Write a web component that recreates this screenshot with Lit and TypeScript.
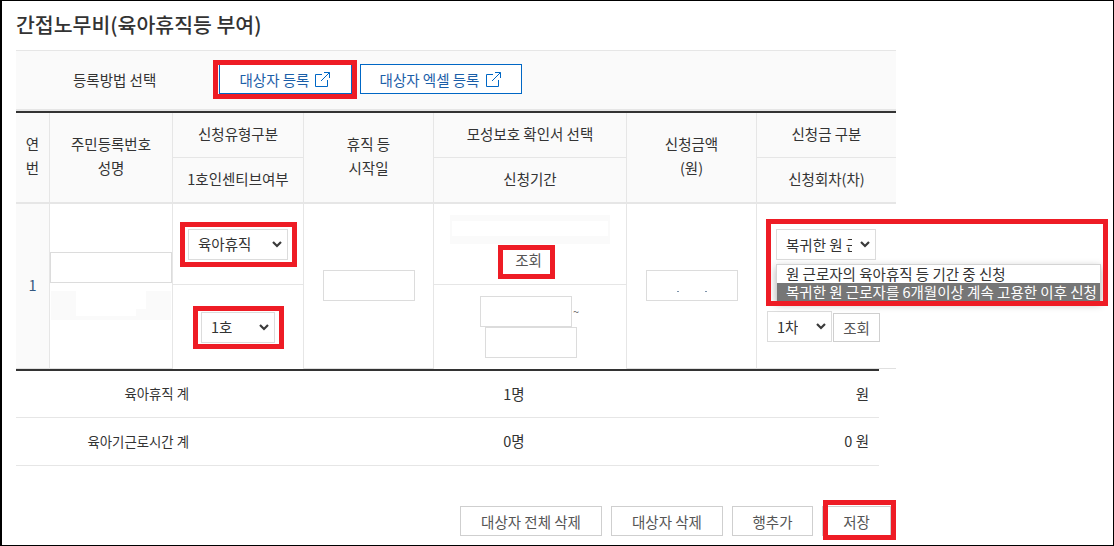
import { LitElement, html, css, svg } from "lit";
import { customElement } from "lit/decorators.js";

const marks = [
  [213, 60, 144, 39],
  [180, 222, 117, 45],
  [193, 306, 91, 43],
  [498, 245, 57, 34],
  [766, 219, 342, 87],
  [823, 500, 73, 40],
];

const chevron = svg`<svg class="chev" width="10" height="7" viewBox="0 0 10 7"><path d="M1 1l4 4 4-4" fill="none" stroke="#3a3a3a" stroke-width="2.2"/></svg>`;
const ext = svg`<svg class="ext" width="16" height="16" viewBox="0 0 16 16"><path d="M7 3.5H.5v12h12V9M6 10l8.5-8.5M9 1.5h5.5V7" fill="none" stroke="#0067c5" stroke-width="1"/></svg>`;

@customElement("app-root")
export class AppRoot extends LitElement {
  static styles = css`
    :host {
      display: block;
      position: relative;
      width: 1114px;
      height: 546px;
      box-sizing: border-box;
      border: 1px solid #000;
      border-left-width: 2px;
      background: #fff;
      overflow: hidden;
      font-family: "Noto Sans CJK KR", "Noto Sans", sans-serif;
      font-size: 14.5px;
      color: #333;
    }
    h1 {
      margin: 0;
      padding: 8px 0 0 14px;
      height: 49px;
      box-sizing: border-box;
      font-size: 20.5px;
      line-height: 30px;
      font-weight: 500;
      color: #333;
    }
    .bar {
      margin-left: 14px;
      width: 880px;
      height: 61px;
      box-sizing: border-box;
      background: #fafafa;
      border-top: 1px solid #e6e6e6;
      border-bottom: 2px solid #e6e6e6;
      display: flex;
      align-items: center;
      padding-bottom: 2px;
    }
    .bar .label { width: 203px; padding-left: 57px; box-sizing: border-box; }
    .lnk {
      height: 30px;
      box-sizing: border-box;
      border: 1px solid #0067c5;
      background: #fff;
      color: #1a5ea8;
      display: flex;
      align-items: center;
      justify-content: center;
      gap: 6px;
    }
    .lnk.a { width: 133px; margin-right: 8px; }
    .lnk.b { width: 162px; gap: 7px; }
    table {
      margin-left: 14px;
      width: 880px;
      table-layout: fixed;
      border-collapse: separate;
      border-spacing: 0;
      border-top: 2px solid #333;
    }
    th, td {
      padding: 0;
      box-sizing: border-box;
      font-weight: 400;
      text-align: center;
      border-right: 1px solid #e6e6e6;
      vertical-align: middle;
      line-height: 24px;
    }
    th:last-child, td.last { border-right: none; }
    th { background: #fafafa; }
    .h1 { height: 45px; border-bottom: 1px solid #e6e6e6; padding-bottom: 2px; }
    .h2 { height: 46px; border-bottom: 2px solid #e6e6e6; padding-bottom: 2px; }
    .hs { height: 91px; border-bottom: 2px solid #e6e6e6; padding-bottom: 4px; }
    .b1 { height: 81px; border-bottom: 1px solid #e6e6e6; }
    .b2 { height: 84px; }
    .bs { height: 165px; border-bottom: 1px solid #e0e0e0; }
    td.num { background: #fafafa; color: #33577f; border-bottom: 1px solid #e0e0e0; padding-bottom: 2px; }
    .sel {
      display: inline-flex;
      align-items: center;
      justify-content: space-between;
      box-sizing: border-box;
      height: 31px;
      border: 1px solid #dcdcdc;
      background: #fff;
      padding: 0 5px 0 9px;
      overflow: hidden;
      white-space: nowrap;
      text-align: left;
      vertical-align: top;
    }
    .sel span { display: block; overflow: hidden; }
    .w100 { width: 100px; }
    .w74 { width: 74px; }
    .w65 { width: 65px; }
    .chev { flex: none; }
    .inp {
      display: block;
      box-sizing: border-box;
      height: 31px;
      border: 1px solid #dcdcdc;
      background: #fff;
    }
    .col2 { display: flex; flex-direction: column; align-items: center; gap: 8px; }
    .col2 .inp { width: 122px; }
    .redact {
      width: 120px;
      height: 29px;
      background: #fafafa;
      overflow: hidden;
      display: flex;
      padding-left: 25px;
      box-sizing: border-box;
    }
    .redact i { display: block; width: 60px; height: 25px; background: #fff; }
    .redact i + i { width: 10px; height: 18px; }
    .w92 { width: 92px; margin: -1px auto 0; }
    .amount { display: flex; align-items: flex-end; justify-content: center; gap: 26px; padding-bottom: 8px; }
    .amount b { width: 2px; height: 1px; background: #7d93aa; }
    .red2 {
      width: 160px;
      height: 29px;
      margin: 0 auto 2px;
      background: #fafafa;
      padding: 6px 2px 8px;
      box-sizing: border-box;
    }
    .red2 i { display: block; height: 15px; background: #fff; }
    .btn {
      display: inline-flex;
      align-items: center;
      justify-content: center;
      box-sizing: border-box;
      height: 30px;
      border: 1px solid #cfcfcf;
      background: #fff;
      color: #555;
    }
    .q { width: 50px; height: 28px; border: none; margin-right: 3px; }
    .dates { position: relative; width: 100px; margin: 0 auto; height: 62px; }
    .dates .inp { width: 92px; }
    .dates .one { position: absolute; left: 0; top: 0; }
    .dates .two { position: absolute; left: 5px; top: 31px; }
    .dates em { position: absolute; left: 93px; top: 3px; font-style: normal; font-size: 11px; color: #666; }
    .rtop { padding-top: 25px; padding-left: 19px; text-align: left; position: relative; vertical-align: top; }
    .rtop > .sel { display: flex; }
    .rtop .row { display: flex; align-items: flex-start; margin: 51px 0 0 -9px; }
    .rtop .q { width: 47px; height: 29px; margin: 2px 0 0 1px; border: 1px solid #cfcfcf; }
    .drop {
      position: absolute;
      left: 19px;
      top: 60px;
      width: 325px;
      height: 37px;
      box-sizing: border-box;
      background: #fff;
      border: 1px solid #d4d4d4;
      box-shadow: 0 3px 8px rgba(0, 0, 0, .3);
      line-height: 18px;
      white-space: nowrap;
      z-index: 1;
    }
    .drop div { height: 18px; padding-left: 9px; }
    .drop .on { background: #767676; color: #fff; }
    .tr {
      display: grid;
      grid-template-columns: 173px 1fr 150px;
      align-items: center;
      border-bottom: 1px solid #e6e6e6;
      width: 863px;
      margin-left: 14px;
      height: 47px;
      box-sizing: border-box;
      padding-bottom: 2px;
    }
    .tr.second { height: 48px; }
    .tr .l { text-align: right; font-size: 13.4px; }
    .tr .c { text-align: center; padding-left: 110px; box-sizing: border-box; }
    .tr .r { text-align: right; padding-right: 10px; }
    .line { margin-left: 14px; width: 863px; height: 2px; background: #333; }
    .foot { display: flex; gap: 9px; margin: 40px 0 0 458px; }
    .foot .btn { flex: none; }
    .mark {
      position: absolute;
      box-sizing: border-box;
      border: 5px solid #ee1c25;
      pointer-events: none;
      z-index: 2;
    }
  `;

  render() {
    return html`
      <h1>간접노무비(육아휴직등 부여)</h1>
      <div class="bar">
        <div class="label">등록방법 선택</div>
        <div class="lnk a">대상자 등록 ${ext}</div>
        <div class="lnk b">대상자 엑셀 등록 ${ext}</div>
      </div>
      <table>
        <colgroup>
          <col style="width:34px" /><col style="width:123px" /><col style="width:131px" /><col style="width:130px" /><col style="width:193px" /><col style="width:130px" /><col style="width:139px" />
        </colgroup>
        <thead>
          <tr>
            <th rowspan="2" class="hs">연<br />번</th>
            <th rowspan="2" class="hs">주민등록번호<br />성명</th>
            <th class="h1">신청유형구분</th>
            <th rowspan="2" class="hs">휴직 등<br />시작일</th>
            <th class="h1">모성보호 확인서 선택</th>
            <th rowspan="2" class="hs">신청금액<br />(원)</th>
            <th class="h1">신청금 구분</th>
          </tr>
          <tr>
            <th class="h2">1호인센티브여부</th>
            <th class="h2">신청기간</th>
            <th class="h2">신청회차(차)</th>
          </tr>
        </thead>
        <tbody>
          <tr>
            <td rowspan="2" class="bs num">1</td>
            <td rowspan="2" class="bs">
              <div class="col2">
                <div class="inp"></div>
                <div class="redact"><i></i><i></i></div>
              </div>
            </td>
            <td class="b1"><div class="sel w100"><span>육아휴직</span>${chevron}</div></td>
            <td rowspan="2" class="bs"><div class="inp w92"></div></td>
            <td class="b1">
              <div class="red2"><i></i></div>
              <div class="btn q">조회</div>
            </td>
            <td rowspan="2" class="bs">
              <div class="inp w92 amount"><b></b><b></b></div>
            </td>
            <td rowspan="2" class="bs last rtop">
              <div class="sel w100"><span style="width:66px">복귀한 원 근로자를 6개월이상</span>${chevron}</div>
              <div class="drop">
                <div>원 근로자의 육아휴직 등 기간 중 신청</div>
                <div class="on">복귀한 원 근로자를 6개월이상 계속 고용한 이후 신청</div>
              </div>
              <div class="row">
                <div class="sel w65"><span>1차</span>${chevron}</div>
                <div class="btn q">조회</div>
              </div>
            </td>
          </tr>
          <tr>
            <td class="b2"><div class="sel w74"><span>1호</span>${chevron}</div></td>
            <td class="b2">
              <div class="dates">
                <div class="inp one"></div>
                <em>~</em>
                <div class="inp two"></div>
              </div>
            </td>
          </tr>
        </tbody>
      </table>
      <div class="line"></div>
      <div class="tr"><div class="l">육아휴직 계</div><div class="c">1명</div><div class="r">원</div></div>
      <div class="tr second"><div class="l">육아기근로시간 계</div><div class="c">0명</div><div class="r">0 원</div></div>
      <div class="foot">
        <div class="btn" style="width:142px">대상자 전체 삭제</div>
        <div class="btn" style="width:112px">대상자 삭제</div>
        <div class="btn" style="width:81px">행추가</div>
        <div class="btn" style="width:69px">저장</div>
      </div>
      ${marks.map(
        ([x, y, w, h]) =>
          html`<div class="mark" style="left:${x - 2}px;top:${y - 1}px;width:${w}px;height:${h}px"></div>`
      )}
    `;
  }
}
